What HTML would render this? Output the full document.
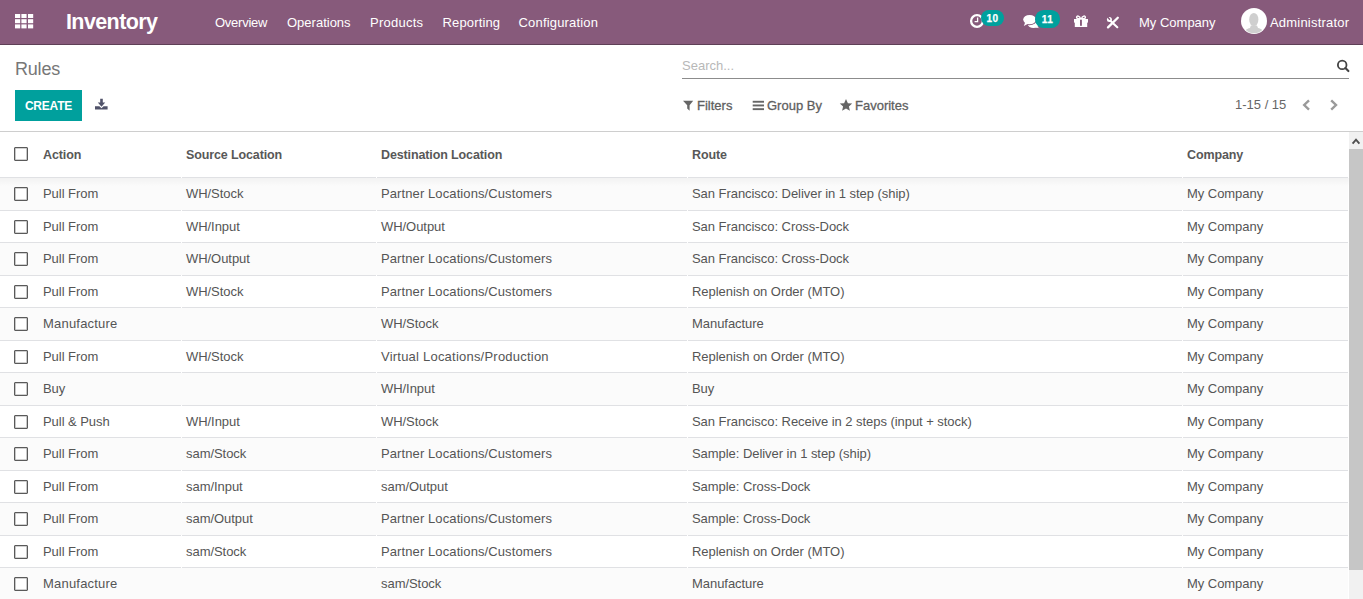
<!DOCTYPE html>
<html><head><meta charset="utf-8">
<style>
*{box-sizing:border-box;}
html,body{margin:0;padding:0;width:1363px;height:599px;overflow:hidden;background:#fff;}
body{font-family:"Liberation Sans",sans-serif;font-size:13px;color:#555;position:relative;}
.a{position:absolute;white-space:nowrap;}
svg{position:absolute;overflow:visible;}
#nav{position:absolute;left:0;top:0;width:1363px;height:45px;background:#875A7B;border-bottom:1px solid #5e3f56;color:#fff;}
#nav .m{top:15px;font-size:13px;line-height:15px;color:#fff;}
#brand{left:66px;top:10px;font-size:21.5px;line-height:24px;font-weight:bold;color:#fff;letter-spacing:-0.6px;}
.badge{position:absolute;background:#00A09D;color:#fff;font-size:10px;font-weight:bold;text-align:center;letter-spacing:0.5px;text-indent:0.5px;-webkit-text-stroke:0.25px #fff;}
#cpline{position:absolute;left:0;top:131px;width:1363px;height:1px;background:#cecece;}
#title{left:15px;top:59px;font-size:18px;line-height:21px;color:#777;letter-spacing:-0.2px;}
#create{position:absolute;left:15px;top:90px;width:67px;height:31px;background:#00A09D;color:#fff;font-weight:bold;font-size:12px;line-height:33px;text-align:center;letter-spacing:-0.2px;}
#sline{position:absolute;left:682px;top:78px;width:667px;height:1px;background:#8c8c8c;}
#sph{left:682px;top:58px;color:#b8b8b8;font-size:13px;line-height:15px;}
.sb{top:98px;font-size:13px;line-height:15px;color:#5f5f5f;-webkit-text-stroke:0.3px #5f5f5f;}
#pager{left:1235px;top:97px;color:#666;font-size:13px;line-height:15px;}
.hd{top:148px;font-weight:bold;color:#585858;font-size:12.5px;line-height:15px;letter-spacing:-0.12px;}
.row{position:absolute;left:0;width:1348px;height:32.5px;border-top:1px solid #e0e1e4;}
.row.o{background:#fbfbfb;}
.row .t{position:absolute;top:0;line-height:31px;white-space:nowrap;letter-spacing:-0.05px;}
.gap{position:absolute;top:-1px;width:1px;height:1px;background:#fff;}
.cb{position:absolute;left:14px;width:14px;height:14px;border:1px solid #5a5a5a;box-shadow:inset 0 0 0 0.6px rgba(90,90,90,0.55);border-radius:1px;background:#fff;}
.row .cb{top:9px;}
#shadow{position:absolute;left:0;top:178px;width:1349px;height:8px;background:linear-gradient(rgba(0,0,0,0.035),rgba(0,0,0,0));}
#sbar{position:absolute;left:1349px;top:132px;width:14px;height:467px;background:#f1f1f1;}
#thumb{position:absolute;left:0;top:17px;width:14px;height:421px;background:#c6c6c6;}
#sbar svg{left:0;top:0;}
</style></head><body>
<div id="nav">
  <svg style="left:14.8px;top:13.7px" width="18.2" height="14.4" viewBox="0 0 18.2 14.4"><g fill="#fff"><rect x="0" y="0" width="5.2" height="4"/><rect x="6.4" y="0" width="5.2" height="4"/><rect x="13" y="0" width="5.2" height="4"/><rect x="0" y="5.2" width="5.2" height="4"/><rect x="6.4" y="5.2" width="5.2" height="4"/><rect x="13" y="5.2" width="5.2" height="4"/><rect x="0" y="10.4" width="5.2" height="4"/><rect x="6.4" y="10.4" width="5.2" height="4"/><rect x="13" y="10.4" width="5.2" height="4"/></g></svg>

  <svg style="left:0;top:0" width="1363" height="45">
    <!-- clock -->
    <circle cx="977" cy="21" r="5.9" fill="none" stroke="#fff" stroke-width="2.3"/>
    <path d="M977.6 17.6V21.6H974.6" fill="none" stroke="#fff" stroke-width="1.3"/>
    <!-- chat -->
    <path d="M1030 24.2c-3.2 0-5.5-1.6-5.5-4.2 0-0.6 0.2-1.2 0.5-1.7" fill="none"/>
    <ellipse cx="1033.5" cy="24.6" rx="5.6" ry="3.3" fill="#fff"/>
    <path d="M1036 26L1039.5 28.2L1035.5 27.5Z" fill="#fff"/>
    <ellipse cx="1029.6" cy="19.6" rx="7.4" ry="5.6" fill="#875A7B"/>
    <ellipse cx="1029.6" cy="19.6" rx="6.4" ry="4.7" fill="#fff"/>
    <path d="M1025.2 22.2L1023.8 26L1028.6 23.6Z" fill="#fff"/>
    <!-- gift -->
    <rect x="1074" y="19" width="14" height="3.6" fill="#fff"/>
    <rect x="1074.8" y="21.5" width="12.4" height="5.5" fill="#fff"/>
    <rect x="1080" y="19.4" width="1.9" height="6.4" fill="#875A7B"/>
    <path d="M1080.6 18.8C1079.6 15.8 1076.6 15.2 1076.6 17.4C1076.6 18.5 1078.2 18.8 1080.6 18.8Z M1081.4 18.8C1082.4 15.8 1085.4 15.2 1085.4 17.4C1085.4 18.5 1083.8 18.8 1081.4 18.8Z" fill="none" stroke="#fff" stroke-width="1.4"/>
    <!-- tools -->
    <path d="M1108 27.4L1117.8 17.8" stroke="#fff" stroke-width="2.3" stroke-linecap="round"/>
    <path d="M1110.6 21L1117.3 27.2" stroke="#fff" stroke-width="2.1" stroke-linecap="round"/>
    <circle cx="1109.4" cy="19.5" r="2.5" fill="#fff"/><path d="M1109.6 19.3L1107.8 17.2" stroke="#875A7B" stroke-width="1.4" stroke-linecap="round"/>
    <!-- avatar -->
    <circle cx="1254" cy="21" r="13" fill="#fff"/>
    <clipPath id="avc"><circle cx="1254" cy="21" r="12.2"/></clipPath>
    <g clip-path="url(#avc)" fill="#cfcfcf">
      <ellipse cx="1253.8" cy="19.5" rx="4.6" ry="6.6"/>
      <path d="M1250.8 25.5L1250 28C1246.5 28.8 1244.6 30.3 1244 34.5H1264C1263.4 30.3 1261.5 28.8 1258 28L1257 25.5Z"/>
    </g>
  </svg>
  <div class="badge" style="left:981px;top:10px;width:22.5px;height:16px;border-radius:8px;line-height:18px;">10</div>
  <div class="badge" style="left:1034.5px;top:10px;width:25.5px;height:17.5px;border-radius:8.75px;line-height:19px;">11</div>
  <div id="brand" class="a">Inventory</div>
  <div class="m a" style="left:215px;letter-spacing:-0.25px">Overview</div>
  <div class="m a" style="left:287px">Operations</div>
  <div class="m a" style="left:370px;letter-spacing:0.25px">Products</div>
  <div class="m a" style="left:442.5px;letter-spacing:0.15px">Reporting</div>
  <div class="m a" style="left:518.5px;letter-spacing:0.18px">Configuration</div>
  <div class="m a" style="left:1139px">My Company</div>
  <div class="m a" style="left:1270px;letter-spacing:0.2px">Administrator</div>
</div>
<div id="cpline"></div>
<div id="title" class="a">Rules</div>
<div id="sph" class="a">Search...</div>
<div id="sline"></div>
<div id="create">CREATE</div>
<div class="sb a" style="left:697px">Filters</div>
<div class="sb a" style="left:767px">Group By</div>
<div class="sb a" style="left:855px">Favorites</div>
<div id="pager" class="a">1-15 / 15</div>

<svg style="left:0;top:45px" width="1363" height="87" viewBox="0 45 1363 87">
  <!-- search -->
  <circle cx="1342.2" cy="64.9" r="4.3" fill="none" stroke="#444" stroke-width="1.8"/>
  <path d="M1345.4 68.1L1348.4 71.1" stroke="#444" stroke-width="2.1" stroke-linecap="round"/>
  <!-- download -->
  <path d="M100.2 98.8H102.8V102.5H105.2L101.5 106.8L97.8 102.5H100.2Z" fill="#505269"/>
  <path d="M95 106.2H99.4L101.5 108.2L103.6 106.2H107.6V109.6H95Z" fill="#505269"/>
  <!-- filter -->
  <path d="M683 100.8H693.2L689.6 105.2V110.7L687.2 108.6V105.2Z" fill="#666"/>
  <!-- group by bars -->
  <rect x="752.7" y="100.8" width="11.3" height="1.9" fill="#666"/>
  <rect x="752.7" y="104.5" width="11.3" height="1.9" fill="#666"/>
  <rect x="752.7" y="108.2" width="11.3" height="1.9" fill="#666"/>
  <!-- star -->
  <path d="M846 99L847.9 103.2L852.2 103.5L848.9 106.4L849.9 110.7L846 108.4L842.1 110.7L843.1 106.4L839.8 103.5L844.1 103.2Z" fill="#666"/>
  <!-- pager arrows -->
  <path d="M1309 100.4L1304.2 105L1309 109.6" fill="none" stroke="#9a9a9a" stroke-width="2.4"/>
  <path d="M1331.2 100.4L1336 105L1331.2 109.6" fill="none" stroke="#9a9a9a" stroke-width="2.4"/>
</svg>
<!--HEADER-->
<span class="cb" style="top:147px"></span>
<div class="hd a" style="left:43px">Action</div>
<div class="hd a" style="left:186px">Source Location</div>
<div class="hd a" style="left:381px">Destination Location</div>
<div class="hd a" style="left:692px">Route</div>
<div class="hd a" style="left:1187px">Company</div>
<!--ROWS-->
<div class="row o" style="top:177.0px"><i class="gap" style="left:181px"></i><i class="gap" style="left:376px"></i><i class="gap" style="left:687px"></i><i class="gap" style="left:1182px"></i><span class="cb"></span><div class="t" style="left:43px">Pull From</div><div class="t" style="left:186px">WH/Stock</div><div class="t" style="left:381px;letter-spacing:0.1px">Partner Locations/Customers</div><div class="t" style="left:692px">San Francisco: Deliver in 1 step (ship)</div><div class="t" style="left:1187px">My Company</div></div>
<div class="row" style="top:209.5px"><i class="gap" style="left:181px"></i><i class="gap" style="left:376px"></i><i class="gap" style="left:687px"></i><i class="gap" style="left:1182px"></i><span class="cb"></span><div class="t" style="left:43px">Pull From</div><div class="t" style="left:186px">WH/Input</div><div class="t" style="left:381px">WH/Output</div><div class="t" style="left:692px">San Francisco: Cross-Dock</div><div class="t" style="left:1187px">My Company</div></div>
<div class="row o" style="top:242.0px"><i class="gap" style="left:181px"></i><i class="gap" style="left:376px"></i><i class="gap" style="left:687px"></i><i class="gap" style="left:1182px"></i><span class="cb"></span><div class="t" style="left:43px">Pull From</div><div class="t" style="left:186px">WH/Output</div><div class="t" style="left:381px;letter-spacing:0.1px">Partner Locations/Customers</div><div class="t" style="left:692px">San Francisco: Cross-Dock</div><div class="t" style="left:1187px">My Company</div></div>
<div class="row" style="top:274.5px"><i class="gap" style="left:181px"></i><i class="gap" style="left:376px"></i><i class="gap" style="left:687px"></i><i class="gap" style="left:1182px"></i><span class="cb"></span><div class="t" style="left:43px">Pull From</div><div class="t" style="left:186px">WH/Stock</div><div class="t" style="left:381px;letter-spacing:0.1px">Partner Locations/Customers</div><div class="t" style="left:692px">Replenish on Order (MTO)</div><div class="t" style="left:1187px">My Company</div></div>
<div class="row o" style="top:307.0px"><i class="gap" style="left:181px"></i><i class="gap" style="left:376px"></i><i class="gap" style="left:687px"></i><i class="gap" style="left:1182px"></i><span class="cb"></span><div class="t" style="left:43px;letter-spacing:0.2px">Manufacture</div><div class="t" style="left:381px">WH/Stock</div><div class="t" style="left:692px">Manufacture</div><div class="t" style="left:1187px">My Company</div></div>
<div class="row" style="top:339.5px"><i class="gap" style="left:181px"></i><i class="gap" style="left:376px"></i><i class="gap" style="left:687px"></i><i class="gap" style="left:1182px"></i><span class="cb"></span><div class="t" style="left:43px">Pull From</div><div class="t" style="left:186px">WH/Stock</div><div class="t" style="left:381px;letter-spacing:0.22px">Virtual Locations/Production</div><div class="t" style="left:692px">Replenish on Order (MTO)</div><div class="t" style="left:1187px">My Company</div></div>
<div class="row o" style="top:372.0px"><i class="gap" style="left:181px"></i><i class="gap" style="left:376px"></i><i class="gap" style="left:687px"></i><i class="gap" style="left:1182px"></i><span class="cb"></span><div class="t" style="left:43px">Buy</div><div class="t" style="left:381px">WH/Input</div><div class="t" style="left:692px">Buy</div><div class="t" style="left:1187px">My Company</div></div>
<div class="row" style="top:404.5px"><i class="gap" style="left:181px"></i><i class="gap" style="left:376px"></i><i class="gap" style="left:687px"></i><i class="gap" style="left:1182px"></i><span class="cb"></span><div class="t" style="left:43px">Pull &amp; Push</div><div class="t" style="left:186px">WH/Input</div><div class="t" style="left:381px">WH/Stock</div><div class="t" style="left:692px">San Francisco: Receive in 2 steps (input + stock)</div><div class="t" style="left:1187px">My Company</div></div>
<div class="row o" style="top:437.0px"><i class="gap" style="left:181px"></i><i class="gap" style="left:376px"></i><i class="gap" style="left:687px"></i><i class="gap" style="left:1182px"></i><span class="cb"></span><div class="t" style="left:43px">Pull From</div><div class="t" style="left:186px">sam/Stock</div><div class="t" style="left:381px;letter-spacing:0.1px">Partner Locations/Customers</div><div class="t" style="left:692px">Sample: Deliver in 1 step (ship)</div><div class="t" style="left:1187px">My Company</div></div>
<div class="row" style="top:469.5px"><i class="gap" style="left:181px"></i><i class="gap" style="left:376px"></i><i class="gap" style="left:687px"></i><i class="gap" style="left:1182px"></i><span class="cb"></span><div class="t" style="left:43px">Pull From</div><div class="t" style="left:186px">sam/Input</div><div class="t" style="left:381px">sam/Output</div><div class="t" style="left:692px">Sample: Cross-Dock</div><div class="t" style="left:1187px">My Company</div></div>
<div class="row o" style="top:502.0px"><i class="gap" style="left:181px"></i><i class="gap" style="left:376px"></i><i class="gap" style="left:687px"></i><i class="gap" style="left:1182px"></i><span class="cb"></span><div class="t" style="left:43px">Pull From</div><div class="t" style="left:186px">sam/Output</div><div class="t" style="left:381px;letter-spacing:0.1px">Partner Locations/Customers</div><div class="t" style="left:692px">Sample: Cross-Dock</div><div class="t" style="left:1187px">My Company</div></div>
<div class="row" style="top:534.5px"><i class="gap" style="left:181px"></i><i class="gap" style="left:376px"></i><i class="gap" style="left:687px"></i><i class="gap" style="left:1182px"></i><span class="cb"></span><div class="t" style="left:43px">Pull From</div><div class="t" style="left:186px">sam/Stock</div><div class="t" style="left:381px;letter-spacing:0.1px">Partner Locations/Customers</div><div class="t" style="left:692px">Replenish on Order (MTO)</div><div class="t" style="left:1187px">My Company</div></div>
<div class="row o" style="top:567.0px"><i class="gap" style="left:181px"></i><i class="gap" style="left:376px"></i><i class="gap" style="left:687px"></i><i class="gap" style="left:1182px"></i><span class="cb"></span><div class="t" style="left:43px;letter-spacing:0.2px">Manufacture</div><div class="t" style="left:381px">sam/Stock</div><div class="t" style="left:692px">Manufacture</div><div class="t" style="left:1187px">My Company</div></div>
<div id="shadow"></div>
<div id="sbar"><div id="thumb"></div><svg width="14" height="17"><path d="M3.6 11.6L7 7.6L10.4 11.6" fill="none" stroke="#505050" stroke-width="1.9"/></svg></div>
</body></html>
